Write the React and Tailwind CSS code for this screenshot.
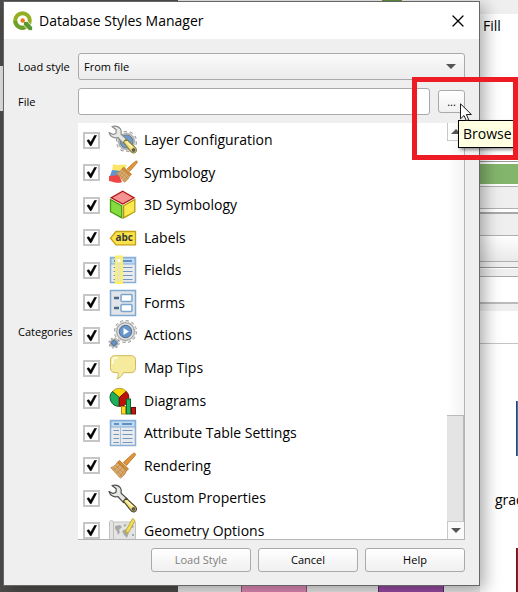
import { X } from 'lucide-react';

// Toothed outline shared by the settings icons
const Gear = ({ cx, cy, r, teeth, width }) => (
  <g>
    <circle cx={cx} cy={cy} r={r} fill="#d9d9d9" stroke="#777" strokeWidth={width} strokeDasharray={`${(Math.PI * r) / teeth} ${(Math.PI * r) / teeth}`} />
    <circle cx={cx} cy={cy} r={r - width * 0.4} fill="#dcdcdc" stroke="#8b8b8b" strokeWidth="0.7" />
    <circle cx={cx} cy={cy} r={r} fill="none" stroke="#dcdcdc" strokeWidth={width - 1} strokeDasharray={`${(Math.PI * r) / teeth} ${(Math.PI * r) / teeth}`} />
  </g>
);

const Wrench = ({ outline = '#4c4f4c', handle = '#4d4a32' }) => (
  <g strokeLinejoin="round">
    <path d="M4 1.500C7 .4 10.800 1.300 12.500 4c1 1.700 1 3.500.6 5.200l6.200 5.700-3.800 3.800-5.700-6.200C6.500 13.600 2 11.600 1 7.600l4.200 1.900L8 8.200l.2-3.400z" fill="#e6e8e6" stroke={outline} strokeWidth="1.200" />
    <path d="M18.200 14.200l9.200 8.400c1.700 2 1.200 4-.4 4.900-1.500.8-3.200.2-4.200-1.100l-7.400-9.300z" fill="#f4e07a" stroke={handle} strokeWidth="1.200" />
    <path d="M18.500 16.500l6 6" stroke="#fff6bd" strokeWidth="1.500" />
    <circle cx="25.500" cy="25" r="1.500" fill="#666" stroke="#222" strokeWidth="0.600" />
  </g>
);

const Brush = () => (
  <g>
    <path d="M26.500 1.200c1.300.4 1.300 1.500.5 2.400L18.600 13.300l-3.200-2.900L24.400 2.200c.7-.7 1.300-1.100 2.100-1z" fill="#e0953a" stroke="#b06a17" strokeWidth="0.800" />
    <path d="M11.500 8.500l9 8.400-1.900 1.900-9.100-8.600z" fill="#d98d35" stroke="#ad6818" strokeWidth="0.800" />
    <path d="M9.300 10.400l9 8.500c-1 3.100-3 5.300-6 7.200L2.800 15.600c3-.9 4.800-2.500 6.500-5.200z" fill="#d9ab71" stroke="#b77c38" strokeWidth="0.800" />
    <path d="M5 15.500l9 8.500M7.500 13.500l9 8.500M5.500 18.500l7-6M8.500 21.500l6.500-6.500M11.500 24.500l5.500-6.500" stroke="#bd8546" strokeWidth="0.700" />
  </g>
);

const ConfigurationIcon = () => (
  <>
    <Gear cx={18.500} cy={15.500} r={9} teeth={10} width={3} />
    <circle cx="18.500" cy="15.500" r="6.500" fill="#6d9ccb" stroke="#687a8c" />
    <g transform="translate(0 -1)">
      <Wrench outline="#8a8c8a" handle="#8c8048" />
    </g>
  </>
);

const SymbologyIcon = () => (
  <>
    <path d="M5 5c5 2 9 0 14 1l-5 8-10-1z" fill="#fbe667" />
    <path d="M4 11l9 1 2 6-13-1z" fill="#6095d4" />
    <path d="M1 17l10-1 3 7c-4 2-8 0-13-1z" fill="#ee4645" />
    <g transform="translate(6 1) scale(.85)">
      <Brush />
    </g>
  </>
);

const CubeIcon = () => (
  <>
    <path d="M14.700.5L27 7.200v13.600L14.700 27.500 2.300 20.800V7.200z" fill="#fff" />
    <path d="M14.700.3L26 6.700 14.700 13 3.300 6.700z" fill="#f59292" stroke="#b01010" strokeWidth="1.300" />
    <path d="M2.500 8.500l11.300 6.300v12L2.500 20.700z" fill="#84dc3e" stroke="#43980d" strokeWidth="1.300" />
    <path d="M26.800 8.500l-11.200 6.300v12l11.200-6.100z" fill="#fbe94d" stroke="#b59a05" strokeWidth="1.300" />
  </>
);

const LabelsIcon = () => (
  <>
    <path d="M2.500 14.200L8 7.500h19.500v13.300H8z" fill="#fae34a" stroke="#c4a012" strokeWidth="1.300" />
    <text x="7.500" y="17.200" fontSize="10" fontWeight="700" fill="#3a3a3a">abc</text>
  </>
);

const TableIcon = () => (
  <>
    <rect x="2.500" y="1.500" width="25" height="25" fill="#ebebeb" stroke="#87afd7" strokeWidth="1.500" />
    <rect x="3" y="2" width="24" height="6" fill="#c3dbf2" stroke="#87afd7" />
    <path d="M6 5h5M14 5h10" stroke="#5f90c6" strokeWidth="2" />
    <path d="M12.500 8v18" stroke="#a5c3e1" />
    <path d="M5.500 11.500h5.500M14.500 11.500h10M5.500 15.500h5.500M14.500 15.500h10M5.500 19.500h5.500M14.500 19.500h10M5.500 23.500h5.500M14.500 23.500h10" stroke="#6d97c4" strokeWidth="1" />
  </>
);

const FieldsIcon = () => (
  <>
    <TableIcon />
    <rect x="8" y="0.500" width="6" height="26.500" fill="#ece5b7" stroke="#fdf25e" strokeWidth="2" />
    <rect x="9.500" y="3" width="3" height="3" fill="#fff" />
  </>
);

const FormsIcon = () => (
  <>
    <rect x="2.500" y="1.500" width="25" height="25" fill="#e2e5e7" stroke="#80a9d2" strokeWidth="1.500" />
    <path d="M6 9h5M6 19h5" stroke="#4d6887" strokeWidth="2.500" />
    <rect x="13" y="5.500" width="11" height="7" rx="1" fill="#fff" stroke="#7ba5d1" strokeWidth="1.500" />
    <rect x="13" y="15.500" width="11" height="7" rx="1" fill="#fff" stroke="#7ba5d1" strokeWidth="1.500" />
  </>
);

const ActionsIcon = () => (
  <>
    <Gear cx={17.500} cy={10.500} r={10} teeth={12} width={3} />
    <circle cx="17.500" cy="10.500" r="6.200" fill="#6797ca" stroke="#4d6c90" />
    <path d="M15.500 7l5.500 3.500-5.500 3.500z" fill="#fff" />
    <Gear cx={6} cy={22} r={4.500} teeth={8} width={2} />
    <circle cx="6" cy="22" r="2.500" fill="#6797ca" stroke="#4d6c90" />
  </>
);

const MapTipsIcon = () => (
  <>
    <path d="M6.500 1.700h17c2.500 0 4 1.800 4 4v8c0 3-1.500 5-4.500 5h-7.500c-1.500 3-3.500 5-6.500 6.300 1.300-2.300 1.500-4.300 1-6.300H7c-3 0-4.500-2-4.500-5v-8c0-2.200 1.500-4 4-4z" fill="#f6eb9c" stroke="#d0b85c" />
    <path d="M4.500 9C4.300 5 5.500 3.600 9 3.500" fill="none" stroke="#fffde8" strokeWidth="1.800" strokeLinecap="round" />
  </>
);

const DiagramsIcon = () => (
  <>
    <path d="M11.300 10.500L4.500 4.500a9 9 0 0 1 13.800 0z" fill="#fbd50b" stroke="#a07f08" strokeWidth="0.700" />
    <path d="M11.300 10.500L4.500 4.500a8.800 8.800 0 0 0 6.800 14.800z" fill="#1fae5a" stroke="#0c5d2c" />
    <path d="M11.300 10.500l7-6a8.800 8.800 0 0 1-7 14.800z" fill="#bd1208" stroke="#760c07" />
    <rect x="13.500" y="19.500" width="4" height="7.500" fill="#fdd929" stroke="#b68a0c" />
    <rect x="18.500" y="12" width="4" height="15" fill="#1fb75d" stroke="#0b6931" />
    <rect x="23.500" y="20.500" width="4" height="6.500" fill="#c01711" stroke="#760c07" />
  </>
);

const GeometryIcon = () => (
  <>
    <path d="M1.500 4.500c1-1.500 3-1.500 4 .5h22v20h-26z" fill="#e4e4e2" stroke="#c1c1bf" />
    <path d="M5.500 5v18" stroke="#bdbdbb" />
    <path d="M7 9l5-1 2 2-3 3 1 2-2 3-1-4-2-2zM14 14l4-2 3 3-2 6-3-3zM15 8l4-1-2 3zM22 8l4 1-1 2-3-1zM24 17h2v2h-2z" fill="#a6aaa6" />
    <path d="M24.500 1.500l-6.500 12v3l3-1.700L27 3.500z" fill="#f3df55" stroke="#b49c24" strokeWidth="0.800" />
  </>
);

const categories = [
  { name: 'Layer Configuration', icon: ConfigurationIcon },
  { name: 'Symbology', icon: SymbologyIcon },
  { name: '3D Symbology', icon: CubeIcon },
  { name: 'Labels', icon: LabelsIcon },
  { name: 'Fields', icon: FieldsIcon },
  { name: 'Forms', icon: FormsIcon },
  { name: 'Actions', icon: ActionsIcon },
  { name: 'Map Tips', icon: MapTipsIcon },
  { name: 'Diagrams', icon: DiagramsIcon },
  { name: 'Attribute Table Settings', icon: TableIcon },
  { name: 'Rendering', icon: Brush },
  { name: 'Custom Properties', icon: Wrench },
  { name: 'Geometry Options', icon: GeometryIcon },
];

const QgisLogo = () => (
  <svg className="h-5 w-5" viewBox="0 0 20 20">
    <circle cx="9.500" cy="9.500" r="7.300" fill="none" stroke="#93b023" strokeWidth="4" />
    <path d="M2.200 10a7.300 7.300 0 0 0 9.500 6.500" fill="none" stroke="#6fa02c" strokeWidth="4" />
    <path d="M10.500 10.500h4l5 5.500v3.500h-3.500L10.500 14z" fill="#589632" stroke="#fff" strokeWidth="0.800" />
    <circle cx="9.700" cy="9.500" r="2.200" fill="#ee7913" />
  </svg>
);

const CategoryRow = ({ name, icon: Icon }) => (
  <label className="flex items-center gap-2 pl-[5px]">
    <span className="relative h-[17px] w-[17px] shrink-0">
      <input type="checkbox" defaultChecked className="peer block h-full w-full appearance-none border-2 border-[#c6c6c6] bg-white" />
      <svg className="pointer-events-none absolute inset-0 hidden peer-checked:block" viewBox="0 0 17 17">
        <path d="M4 8.500l1.800-.8 1.900 2.600L11.500 3.500h2L8.200 13.700H7.300z" fill="#000" stroke="#000" strokeWidth="0.600" />
      </svg>
    </span>
    <svg className="h-7 w-7 shrink-0 overflow-visible" viewBox="0 0 28 28" fill="none">
      <Icon />
    </svg>
    <span className="text-[14px] leading-5">{name}</span>
  </label>
);

const ScrollBar = () => (
  <div className="flex w-[18px] shrink-0 flex-col border-r border-[#b4b4b4] bg-linear-to-r from-white to-[#f3f3f3]">
    <div className="flex h-[18px] items-center justify-center border-b border-l border-[#c8c8c8]">
      <svg className="h-[5px] w-[10px]" viewBox="0 0 10 5"><path d="M0 5L5 0l5 5z" fill="#555" /></svg>
    </div>
    <div className="flex-1" />
    <div className="h-[106px] border-t border-r border-[#b9b9b9] bg-[#e4e4e4]" />
    <div className="flex h-[18px] items-center justify-center border-t border-l border-[#c8c8c8] bg-[#fafafa]">
      <svg className="h-[5px] w-[10px]" viewBox="0 0 10 5"><path d="M0 0l5 5 5-5z" fill="#555" /></svg>
    </div>
  </div>
);

// Main window that shows around the edges of the dialog
const MainWindow = () => (
  <div className="absolute inset-0 flex overflow-hidden bg-[#504e4d]">
    <div className="flex w-[178px] shrink-0 flex-col">
      <div className="h-[66px]" />
      <div className="h-[45px] bg-[#e8e8e8]" />
    </div>
    <div className="flex flex-1 flex-col justify-between bg-[#efefef]">
      <div className="flex h-[2px] justify-end pr-[78px]">
        <div className="w-5 bg-[#5d9440]" />
      </div>
      <div className="flex h-2 justify-end gap-[71px] pr-9">
        <div className="w-[66px] border-x border-[#8f5876] bg-[#e58cbb]" />
        <div className="w-[66px] border-x border-[#5d2b68] bg-[#9a4ca6]" />
      </div>
    </div>
    <div className="flex w-[38px] shrink-0 flex-col bg-white">
      <div className="h-[14px] bg-[#efefef]" />
      <div className="h-[147px] pt-[2px] pl-[3px] text-[14px] leading-5">Fill</div>
      <div className="h-[3px] border-t border-[#999]" />
      <div className="h-5 bg-[#84b56d]" />
      <div className="mt-[2px] h-[23px] border-y border-[#b0b0b0] bg-[#efefef]" />
      <div className="mt-[3px] h-6 border-t-2 border-b border-t-[#a8a8a8] border-b-[#b0b0b0] bg-[#efefef]" />
      <div className="h-[26px] border-b border-[#b0b0b0] bg-linear-to-b from-white to-[#e9e9e9]" />
      <div className="h-[6px] border-b border-[#999] bg-[#efefef]" />
      <div className="mt-px h-2 border-b border-[#aaa] bg-[#efefef]" />
      <div className="h-[27px] border-b-2 border-[#bbb]" />
      <div className="h-[7px] bg-[#efefef]" />
      <div className="h-[33px] border-b border-[#c4c4c4]" />
      <div className="mt-[57px] h-[55px] w-[2px] self-end border-l border-[#24476b] bg-[#3c78a8]" />
      <div className="mt-[34px] h-5 overflow-hidden pl-[15px] text-[14px] leading-5">gradient</div>
      <div className="mt-[38px] w-[2px] flex-1 self-end border-l border-[#5d1a20] bg-[#9b1c24]" />
    </div>
  </div>
);

const buttonStyle = 'h-6 w-[100px] rounded-[3px] border border-[#aaa] bg-linear-to-b from-white to-[#f0f0f0] text-[11px] leading-4';

export default function App() {
  return (
    <div className="relative flow-root min-h-screen overflow-hidden font-['Open_Sans','Noto_Sans',sans-serif] text-black">
      <MainWindow />

      <div className="relative mt-px mr-[38px] mb-[6px] ml-[3px] border border-[#666] bg-[#efefef] shadow-[4px_4px_16px_rgba(0,0,0,0.35)]">
        <header className="flex h-[37px] items-center gap-[6px] bg-white pr-[13px] pl-[9px]">
          <QgisLogo />
          <h1 className="flex-1 text-[14px] leading-5">Database Styles Manager</h1>
          <button aria-label="Close">
            <X className="h-4 w-4 scale-125" strokeWidth={1.500} />
          </button>
        </header>

        <main className="grid grid-cols-[60px_1fr] items-center gap-y-2 px-[14px] pt-[14px] text-[11px] leading-4">
          <label htmlFor="load-style">Load style</label>
          <div className="relative">
            <select id="load-style" className="block h-[27px] w-full appearance-none rounded-[3px] border border-[#aaa] bg-linear-to-b from-[#fafafa] to-[#ececec] px-[5px]">
              <option>From file</option>
            </select>
            <svg className="pointer-events-none absolute top-[11px] right-[9px] h-[5px] w-[10px]" viewBox="0 0 10 5">
              <path d="M0 0l5 5 5-5z" fill="#555" />
            </svg>
          </div>

          <label htmlFor="file">File</label>
          <div className="flex items-center gap-2">
            <input id="file" type="text" className="h-[27px] min-w-0 flex-1 rounded-[3px] border border-[#aaa] bg-white px-[5px]" />
            <button className="h-[23px] w-[27px] rounded-[3px] border border-[#aaa] bg-linear-to-b from-white to-[#f0f0f0]">...</button>
          </div>

          <span>Categories</span>
          <div className="flex h-[417px] overflow-hidden border-b border-[#b4b4b4] bg-white">
            <div className="grid h-[424px] flex-1 auto-rows-fr pt-px">
              {categories.map((category) => (
                <CategoryRow key={category.name} {...category} />
              ))}
            </div>
            <ScrollBar />
          </div>
        </main>

        <footer className="flex justify-end gap-[7px] px-[14px] pt-2 pb-[13px]">
          <button disabled className={`${buttonStyle} text-[#808080]`}>Load Style</button>
          <button className={buttonStyle}>Cancel</button>
          <button className={buttonStyle}>Help</button>
        </footer>
      </div>

      {/* Tooltip, pointer and highlight over the browse button */}
      <div role="tooltip" className="absolute top-[120px] right-[3px] flex h-7 w-[57px] items-center border border-black bg-[#ffffe1] pl-1 text-[14px] leading-5 shadow-[2px_2px_3px_rgba(0,0,0,0.4)]">
        Browse
      </div>
      <svg className="absolute top-[103px] right-[46px] h-[18px] w-3" viewBox="0 0 12 18">
        <path d="M.5.8v15l3.500-3.300 2.400 5.200 2.300-1-2.300-5.200h5z" fill="#fff" stroke="#000" strokeWidth="0.900" />
      </svg>
      <div className="pointer-events-none absolute top-[77px] right-0 h-[83px] w-[106px] border-[5px] border-[#ed1c24]" />
    </div>
  );
}
